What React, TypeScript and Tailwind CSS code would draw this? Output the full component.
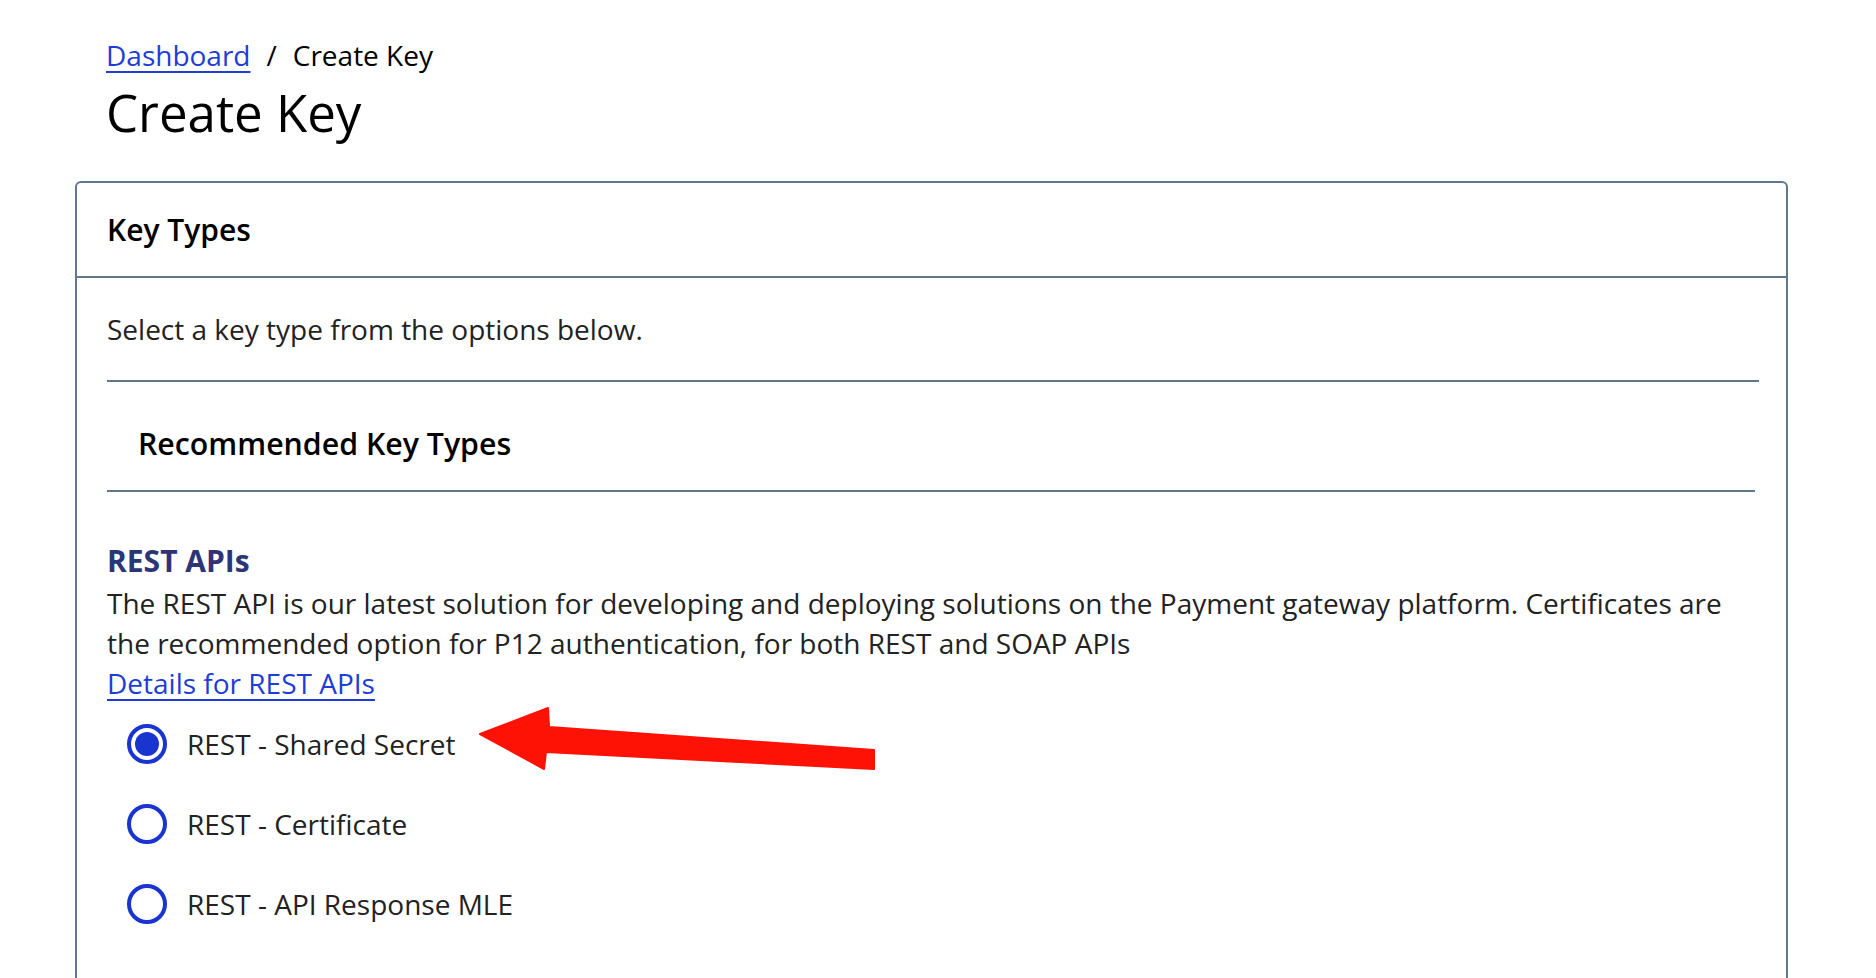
import React, { useState } from 'react';

const options = ['REST - Shared Secret', 'REST - Certificate', 'REST - API Response MLE'];

function Radio({ checked }: { checked: boolean }) {
  return (
    <span className="flex h-[40px] w-[40px] shrink-0 items-center justify-center rounded-full border-[4px] border-[#1934cf] bg-white">
      {checked && <span className="h-[24px] w-[24px] rounded-full bg-[#1934cf]" />}
    </span>
  );
}

export default function App() {
  const [selected, setSelected] = useState(0);

  return (
    <div className="relative min-h-screen bg-white pl-[75px] pr-[88px] font-['Open_Sans',_'Noto_Sans',_sans-serif] text-[#222]">
      {/* Page header */}
      <div className="pl-[31px] pt-[35px]">
        <nav className="flex items-center text-[28px] leading-[40px]">
          <a href="#" className="text-[#1d3dd6] underline underline-offset-[5px] decoration-[2px]">
            Dashboard
          </a>
          <span className="mx-4 text-black">/</span>
          <span className="text-black">Create Key</span>
        </nav>
        <h1 className="mt-[5px] text-[51px] leading-[64px] font-normal text-black">Create Key</h1>
      </div>

      {/* Key types card */}
      <div className="mt-[37px] rounded-[6px] border-2 border-[#5f788e] pb-[120px]">
        <div className="border-b-2 border-[#5f788e] px-[30px] pt-[29px] pb-[28px]">
          <h2 className="text-[30px] leading-[36px] font-semibold text-black">Key Types</h2>
        </div>

        <div className="pl-[30px] pr-[27px]">
          <p className="pt-[31px] text-[28px] leading-[40px]">Select a key type from the options below.</p>
          <div className="mt-[31px] h-[2px] bg-[#5f788e]" />

          <h3 className="mt-[44px] pl-[31px] text-[30.3px] leading-[36px] font-semibold text-black">
            Recommended Key Types
          </h3>
          <div className="mt-[28px] mr-[4px] h-[2px] bg-[#5f788e]" />

          <h4 className="mt-[49px] text-[30px] leading-[40px] font-bold text-[#2e3576]">REST APIs</h4>
          <p className="mt-[2px] text-[28px] leading-[40px]">
            The REST API is our latest solution for developing and deploying solutions on the Payment gateway platform. Certificates are the recommended option for P12 authentication, for both REST and SOAP APIs
          </p>
          <a href="#" className="block w-fit text-[28px] leading-[40px] text-[#1d3dd6] underline underline-offset-[5px] decoration-[2px]">
            Details for REST APIs
          </a>

          <div className="mt-[1px] flex flex-col">
            {options.map((opt, i) => (
              <label
                key={opt}
                onClick={() => setSelected(i)}
                className="flex h-[80px] cursor-pointer items-center gap-[20px] pl-[20px]"
              >
                <Radio checked={selected === i} />
                <span className="text-[28px] leading-[40px]">{opt}</span>
              </label>
            ))}
          </div>
        </div>
      </div>

      {/* Annotation arrow */}
      <svg
        className="pointer-events-none absolute left-[470px] top-[701px]"
        width="420"
        height="80"
        viewBox="0 0 420 80"
      >
        <polygon
          points="10,33 78,7 79,26 404,49 404,68 76,51 74,68"
          fill="#fe1206"
          stroke="#fe1206"
          strokeWidth="2"
          strokeLinejoin="round"
        />
      </svg>
    </div>
  );
}
